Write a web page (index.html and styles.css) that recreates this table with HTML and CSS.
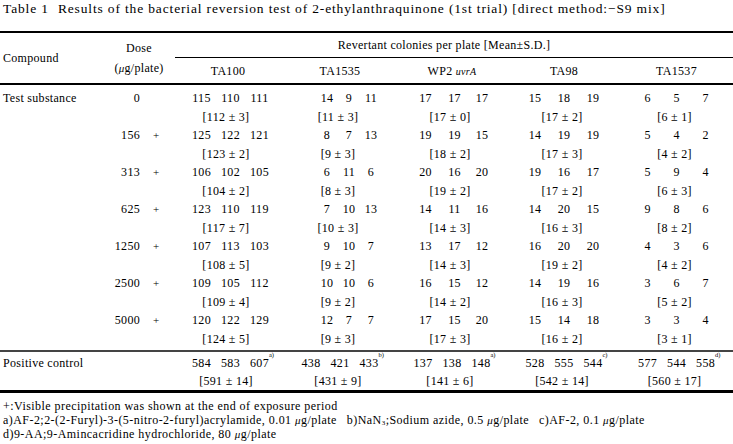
FILE: index.html
```html
<!DOCTYPE html>
<html>
<head>
<meta charset="utf-8">
<link rel="stylesheet" href="styles.css">
</head>
<body>
<div class="page">
  <div class="title"><span class="tno">Table 1</span>Results of the bacterial reversion test of 2-ethylanthraquinone (1st trial) [direct method:−S9 mix]</div>
  <table class="tbl">
    <colgroup>
      <col class="w-comp"><col class="w-dose"><col class="w-st"><col class="w-st"><col class="w-st"><col class="w-st"><col class="w-last">
    </colgroup>
    <thead>
      <tr class="h1">
        <th rowspan="2" class="hcomp">Compound</th>
        <th rowspan="2" class="hdose"><div>Dose</div><div>(<i class="mu">μ</i>g/plate)</div></th>
        <th colspan="5" class="hspan"><div class="spanin">Revertant colonies per plate [Mean±S.D.]</div></th>
      </tr>
      <tr class="h2">
        <th>TA100</th><th>TA1535</th><th>WP2 <i class="uvr">uvrA</i></th><th>TA98</th><th>TA1537</th>
      </tr>
    </thead>
    <tbody class="body">
      <tr class="firstrow">
        <td class="comp">Test substance</td>
        <td class="dose"><span class="dv">0</span><span class="pp"></span></td>
        <td class="s100"><div class="trip"><span>115</span><span>110</span><span>111</span></div><div class="mean">[112 ± 3]</div></td>
        <td class="s1535"><div class="trip"><span>14</span><span>9</span><span>11</span></div><div class="mean">[11 ± 3]</div></td>
        <td class="swp"><div class="trip"><span>17</span><span>17</span><span>17</span></div><div class="mean">[17 ± 0]</div></td>
        <td><div class="trip"><span>15</span><span>18</span><span>19</span></div><div class="mean">[17 ± 2]</div></td>
        <td><div class="trip"><span>6</span><span>5</span><span>7</span></div><div class="mean">[6 ± 1]</div></td>
      </tr>
      <tr>
        <td class="comp"></td>
        <td class="dose"><span class="dv">156</span><span class="pp">+</span></td>
        <td class="s100"><div class="trip"><span>125</span><span>122</span><span>121</span></div><div class="mean">[123 ± 2]</div></td>
        <td class="s1535"><div class="trip"><span>8</span><span>7</span><span>13</span></div><div class="mean">[9 ± 3]</div></td>
        <td class="swp"><div class="trip"><span>19</span><span>19</span><span>15</span></div><div class="mean">[18 ± 2]</div></td>
        <td><div class="trip"><span>14</span><span>19</span><span>19</span></div><div class="mean">[17 ± 3]</div></td>
        <td><div class="trip"><span>5</span><span>4</span><span>2</span></div><div class="mean">[4 ± 2]</div></td>
      </tr>
      <tr>
        <td class="comp"></td>
        <td class="dose"><span class="dv">313</span><span class="pp">+</span></td>
        <td class="s100"><div class="trip"><span>106</span><span>102</span><span>105</span></div><div class="mean">[104 ± 2]</div></td>
        <td class="s1535"><div class="trip"><span>6</span><span>11</span><span>6</span></div><div class="mean">[8 ± 3]</div></td>
        <td class="swp"><div class="trip"><span>20</span><span>16</span><span>20</span></div><div class="mean">[19 ± 2]</div></td>
        <td><div class="trip"><span>19</span><span>16</span><span>17</span></div><div class="mean">[17 ± 2]</div></td>
        <td><div class="trip"><span>5</span><span>9</span><span>4</span></div><div class="mean">[6 ± 3]</div></td>
      </tr>
      <tr>
        <td class="comp"></td>
        <td class="dose"><span class="dv">625</span><span class="pp">+</span></td>
        <td class="s100"><div class="trip"><span>123</span><span>110</span><span>119</span></div><div class="mean">[117 ± 7]</div></td>
        <td class="s1535"><div class="trip"><span>7</span><span>10</span><span>13</span></div><div class="mean">[10 ± 3]</div></td>
        <td class="swp"><div class="trip"><span>14</span><span>11</span><span>16</span></div><div class="mean">[14 ± 3]</div></td>
        <td><div class="trip"><span>14</span><span>20</span><span>15</span></div><div class="mean">[16 ± 3]</div></td>
        <td><div class="trip"><span>9</span><span>8</span><span>6</span></div><div class="mean">[8 ± 2]</div></td>
      </tr>
      <tr>
        <td class="comp"></td>
        <td class="dose"><span class="dv">1250</span><span class="pp">+</span></td>
        <td class="s100"><div class="trip"><span>107</span><span>113</span><span>103</span></div><div class="mean">[108 ± 5]</div></td>
        <td class="s1535"><div class="trip"><span>9</span><span>10</span><span>7</span></div><div class="mean">[9 ± 2]</div></td>
        <td class="swp"><div class="trip"><span>13</span><span>17</span><span>12</span></div><div class="mean">[14 ± 3]</div></td>
        <td><div class="trip"><span>16</span><span>20</span><span>20</span></div><div class="mean">[19 ± 2]</div></td>
        <td><div class="trip"><span>4</span><span>3</span><span>6</span></div><div class="mean">[4 ± 2]</div></td>
      </tr>
      <tr>
        <td class="comp"></td>
        <td class="dose"><span class="dv">2500</span><span class="pp">+</span></td>
        <td class="s100"><div class="trip"><span>109</span><span>105</span><span>112</span></div><div class="mean">[109 ± 4]</div></td>
        <td class="s1535"><div class="trip"><span>10</span><span>10</span><span>6</span></div><div class="mean">[9 ± 2]</div></td>
        <td class="swp"><div class="trip"><span>16</span><span>15</span><span>12</span></div><div class="mean">[14 ± 2]</div></td>
        <td><div class="trip"><span>14</span><span>19</span><span>16</span></div><div class="mean">[16 ± 3]</div></td>
        <td><div class="trip"><span>3</span><span>6</span><span>7</span></div><div class="mean">[5 ± 2]</div></td>
      </tr>
      <tr class="lastrow">
        <td class="comp"></td>
        <td class="dose"><span class="dv">5000</span><span class="pp">+</span></td>
        <td class="s100"><div class="trip"><span>120</span><span>122</span><span>129</span></div><div class="mean">[124 ± 5]</div></td>
        <td class="s1535"><div class="trip"><span>12</span><span>7</span><span>7</span></div><div class="mean">[9 ± 3]</div></td>
        <td class="swp"><div class="trip"><span>17</span><span>15</span><span>20</span></div><div class="mean">[17 ± 3]</div></td>
        <td><div class="trip"><span>15</span><span>14</span><span>18</span></div><div class="mean">[16 ± 2]</div></td>
        <td><div class="trip"><span>3</span><span>3</span><span>4</span></div><div class="mean">[3 ± 1]</div></td>
      </tr>
    </tbody>
    <tbody class="pos">
      <tr>
        <td class="comp">Positive control</td>
        <td class="dose"></td>
        <td class="s100"><div class="trip"><span>584</span><span>583</span><span><b class="n">607<sup>a)</sup></b></span></div><div class="mean">[591 ± 14]</div></td>
        <td><div class="trip"><span>438</span><span>421</span><span><b class="n">433<sup>b)</sup></b></span></div><div class="mean">[431 ± 9]</div></td>
        <td><div class="trip"><span>137</span><span>138</span><span><b class="n">148<sup>a)</sup></b></span></div><div class="mean">[141 ± 6]</div></td>
        <td><div class="trip"><span>528</span><span>555</span><span><b class="n">544<sup>c)</sup></b></span></div><div class="mean">[542 ± 14]</div></td>
        <td><div class="trip"><span>577</span><span>544</span><span><b class="n">558<sup>d)</sup></b></span></div><div class="mean">[560 ± 17]</div></td>
      </tr>
    </tbody>
  </table>
  <div class="notes">
    <div>+:Visible precipitation was shown at the end of exposure period</div>
    <div>a)AF-2;2-(2-Furyl)-3-(5-nitro-2-furyl)acrylamide, 0.01 <i class="mu">μ</i>g/plate<span class="ng"></span>b)NaN<sub>3</sub>;Sodium azide, 0.5 <i class="mu">μ</i>g/plate<span class="ng"></span>c)AF-2, 0.1 <i class="mu">μ</i>g/plate</div>
    <div>d)9-AA;9-Amincacridine hydrochloride, 80 <i class="mu">μ</i>g/plate</div>
  </div>
</div>
</body>
</html>
```

FILE: styles.css
```css
html, body {
  margin: 0;
  padding: 0;
  background: #fff;
}
body {
  font-family: "Liberation Serif", "Times New Roman", serif;
  color: #000;
}
.page {
  width: 733px;
  height: 444px;
  overflow: hidden;
}
.title {
  font-size: 13.5px;
  line-height: 16px;
  padding: 1px 0 0 3px;
  height: 14px;
  letter-spacing: 0.85px;
  white-space: nowrap;
}
.tno {
  display: inline-block;
  margin-right: 9px;
}
.tbl {
  margin-top: 16px;
  width: 733px;
  border-collapse: collapse;
  table-layout: fixed;
  font-size: 12px;
  letter-spacing: 0.3px;
}
.w-comp { width: 100px; }
.w-dose { width: 72px; }
.w-st { width: 112px; }
.w-last { width: 113px; }
.tbl thead {
  border-top: 2px solid #000;
  border-bottom: 2px solid #000;
}
.tbl th {
  font-weight: normal;
  padding: 0;
  vertical-align: middle;
}
.h1 { height: 25px; }
.h2 { height: 26px; }
.hcomp {
  text-align: left;
  padding-left: 3px !important;
}
.hdose {
  line-height: 20px;
  text-align: center;
  padding-left: 6px !important;
}
.hspan {
  text-align: left;
}
.spanin {
  margin-left: 3px;
  height: 25px;
  border-bottom: 1px solid #000;
  display: flex;
  align-items: center;
  justify-content: center;
  padding-right: 20px;
  box-sizing: border-box;
}
.h2 th {
  text-align: center;
  padding-top: 2px;
}
.uvr {
  font-size: 10px;
}
.mu {
  font-size: 11px;
}
.tbl td {
  padding: 0;
  vertical-align: top;
  line-height: 18.5px;
}
.body tr { height: 37px; }
.body tr.firstrow { height: 41px; }
.body tr.firstrow td { padding-top: 4px; }
.body tr.lastrow { height: 40px; }
.comp {
  padding-left: 3px !important;
  white-space: nowrap;
}
.dose {
  white-space: nowrap;
}
.dv {
  display: inline-block;
  width: 40px;
  text-align: right;
}
.pp {
  display: inline-block;
  margin-left: 13px;
  font-size: 11px;
}
.trip {
  display: grid;
  grid-template-columns: repeat(3, 29px);
  justify-content: center;
  text-align: center;
}
.s100 .trip { padding-left: 5px; }
.s1535 .trip {
  grid-template-columns: repeat(3, 22px);
  padding-left: 18px;
}
.swp .trip {
  grid-template-columns: 32px 26px 29px;
  padding-left: 2px;
}
.n {
  font-weight: normal;
  position: relative;
  display: inline-block;
}
.n sup {
  position: absolute;
  left: 100%;
  top: -4px;
  font-size: 6.5px;
  line-height: 8px;
  letter-spacing: 0;
}
.mean {
  text-align: center;
  padding-right: 4px;
}
.pos {
  border-top: 2px solid #444;
  border-bottom: 3px solid #000;
}
.pos tr { height: 40px; }
.pos td {
  line-height: 17.5px !important;
  padding-top: 3px !important;
}
.notes {
  padding: 6px 0 0 3px;
  font-size: 12px;
  line-height: 14px;
  letter-spacing: 0.45px;
  white-space: nowrap;
}
.ng {
  display: inline-block;
  width: 10px;
}
sub {
  font-size: 7px;
  vertical-align: -1px;
  line-height: 0;
}
```
